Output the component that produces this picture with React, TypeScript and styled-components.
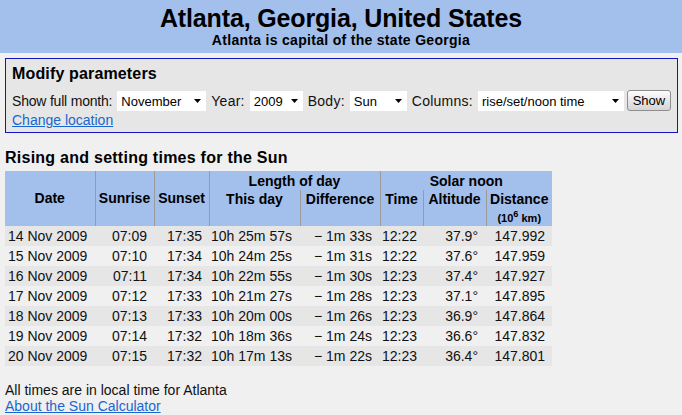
import React from "react";
import styled, { createGlobalStyle } from "styled-components";

const GlobalStyle = createGlobalStyle`
  html, body { margin: 0; padding: 0; background: #f0f0f0; }
  body { font-family: "Liberation Sans", Arial, sans-serif; color: #111; }
`;

const Page = styled.div`
  width: 682px;
`;

const Banner = styled.header`
  background: #a3bfec;
  height: 53px;
  box-sizing: border-box;
  padding-top: 4px;
  text-align: center;
`;

const Title = styled.h1`
  margin: 0;
  font-size: 25px;
  line-height: 28px;
  letter-spacing: -0.15px;
  font-weight: bold;
  color: #000;
`;

const Subtitle = styled.div`
  font-size: 14px;
  line-height: 16px;
  letter-spacing: 0.3px;
  font-weight: bold;
  color: #000;
`;

const Content = styled.main`
  padding: 0 4px 0 5px;
`;

const ParamBox = styled.form`
  margin-top: 5px;
  border: 1px solid #1414c4;
  background: #e6e6e6;
  padding: 5px 6px 4px 6px;
`;

const BoxHeading = styled.h2`
  margin: 0;
  font-size: 16px;
  line-height: 19px;
  letter-spacing: 0.15px;
  font-weight: bold;
  color: #000;
`;

const FormRow = styled.div`
  margin-top: 8px;
  display: flex;
  align-items: center;
  gap: 5px;
  height: 20px;
  font-size: 14px;
`;

const Label = styled.span<{ $tight?: boolean }>`
  color: #111;
  white-space: nowrap;
  letter-spacing: ${(p) => (p.$tight ? "-0.2px" : "0.25px")};
`;

const FakeSelect = styled.div<{ $w: number }>`
  width: ${(p) => p.$w}px;
  height: 20px;
  box-sizing: border-box;
  background: #fff;
  display: flex;
  align-items: center;
  justify-content: space-between;
  padding: 0 5px 0 4px;
  font-size: 13px;
  color: #000;
`;

const Arrow = styled.svg`
  width: 7px;
  height: 4px;
  flex: none;
`;

const ShowButton = styled.button`
  margin-left: -2px;
  width: 44px;
  height: 21px;
  margin-top: -2px;
  box-sizing: border-box;
  border: 1px solid #8e8e8e;
  border-radius: 3px;
  background: linear-gradient(#fdfdfd, #e4e4e4 60%, #d6d6d6);
  font-family: "Liberation Sans", Arial, sans-serif;
  font-size: 13px;
  color: #000;
  padding: 0;
`;

const Link = styled.a`
  color: #1a66d0;
  text-decoration: underline;
  font-size: 14px;
  line-height: 16px;
  display: block;
`;

const LocationLink = styled(Link)`
  margin-top: 1px;
`;

const SectionHeading = styled.h2`
  margin: 15px 0 4px 0;
  font-size: 16px;
  line-height: 19px;
  letter-spacing: 0.25px;
  font-weight: bold;
  color: #000;
`;

const Table = styled.table`
  border-collapse: collapse;
  border-spacing: 0;
  table-layout: fixed;
  width: 547px;
  font-size: 14px;
`;

const Col = styled.col<{ $w: number }>`
  width: ${(p) => p.$w}px;
`;

const Th = styled.th<{ $top?: boolean; $first?: boolean }>`
  background: #a3bfec;
  font-weight: bold;
  color: #000;
  padding: 0 2px;
  text-align: center;
  white-space: nowrap;
  vertical-align: ${(p) => (p.$top ? "top" : "middle")};
  border-left: ${(p) => (p.$first ? "none" : "1px solid #9a9a9a")};
`;

const GroupRow = styled.tr`
  height: 19px;
`;

const SubRow = styled.tr`
  height: 34px;
  & > th {
    padding-top: 1px;
    line-height: 16px;
  }
`;

const Unit = styled.span`
  display: block;
  font-size: 11px;
  line-height: 15px;
`;

const DataRow = styled.tr<{ $odd: boolean }>`
  height: 20px;
  background: ${(p) => (p.$odd ? "#e6e6e6" : "#f0f0f0")};
`;

const Td = styled.td<{ $align?: "left" | "right"; $pad?: number }>`
  padding: 0 ${(p) => (p.$align === "left" ? 0 : p.$pad ?? 7)}px 0
    ${(p) => (p.$align === "left" ? 3 : 0)}px;
  text-align: ${(p) => p.$align ?? "right"};
  white-space: nowrap;
  color: #111;
`;

const Footer = styled.div`
  margin-top: 16px;
  font-size: 14px;
  line-height: 16px;
`;

const rows = [
  ["14 Nov 2009", "07:09", "17:35", "10h 25m 57s", "− 1m 33s", "12:22", "37.9°", "147.992"],
  ["15 Nov 2009", "07:10", "17:34", "10h 24m 25s", "− 1m 31s", "12:22", "37.6°", "147.959"],
  ["16 Nov 2009", "07:11", "17:34", "10h 22m 55s", "− 1m 30s", "12:23", "37.4°", "147.927"],
  ["17 Nov 2009", "07:12", "17:33", "10h 21m 27s", "− 1m 28s", "12:23", "37.1°", "147.895"],
  ["18 Nov 2009", "07:13", "17:33", "10h 20m 00s", "− 1m 26s", "12:23", "36.9°", "147.864"],
  ["19 Nov 2009", "07:14", "17:32", "10h 18m 36s", "− 1m 24s", "12:23", "36.6°", "147.832"],
  ["20 Nov 2009", "07:15", "17:32", "10h 17m 13s", "− 1m 22s", "12:23", "36.4°", "147.801"],
];

const Select = ({ w, value }: { w: number; value: string }) => (
  <FakeSelect $w={w}>
    <span>{value}</span>
    <Arrow viewBox="0 0 7 4">
      <path d="M0 0h7L3.5 4z" fill="#000" />
    </Arrow>
  </FakeSelect>
);

export default function App() {
  return (
    <Page>
      <GlobalStyle />
      <Banner>
        <Title>Atlanta, Georgia, United States</Title>
        <Subtitle>Atlanta is capital of the state Georgia</Subtitle>
      </Banner>
      <Content>
        <ParamBox onSubmit={(e) => e.preventDefault()}>
          <BoxHeading>Modify parameters</BoxHeading>
          <FormRow>
            <Label $tight>Show full month:</Label>
            <Select w={89} value="November" />
            <Label>Year:</Label>
            <Select w={53} value="2009" />
            <Label>Body:</Label>
            <Select w={57} value="Sun" />
            <Label>Columns:</Label>
            <Select w={146} value="rise/set/noon time" />
            <ShowButton type="button">Show</ShowButton>
          </FormRow>
          <LocationLink href="#">Change location</LocationLink>
        </ParamBox>

        <SectionHeading>Rising and setting times for the Sun</SectionHeading>
        <Table>
          <colgroup>
            <Col $w={90} />
            <Col $w={59} />
            <Col $w={55} />
            <Col $w={91} />
            <Col $w={80} />
            <Col $w={43} />
            <Col $w={63} />
            <Col $w={66} />
          </colgroup>
          <thead>
            <GroupRow>
              <Th rowSpan={2} $first>Date</Th>
              <Th rowSpan={2}>Sunrise</Th>
              <Th rowSpan={2}>Sunset</Th>
              <Th colSpan={2}>Length of day</Th>
              <Th colSpan={3}>Solar noon</Th>
            </GroupRow>
            <SubRow>
              <Th $top>This day</Th>
              <Th $top>Difference</Th>
              <Th $top>Time</Th>
              <Th $top>Altitude</Th>
              <Th $top>
                Distance
                <Unit>
                  (10<sup>6</sup> km)
                </Unit>
              </Th>
            </SubRow>
          </thead>
          <tbody>
            {rows.map((r, i) => (
              <DataRow key={r[0]} $odd={i % 2 === 0}>
                <Td $align="left">{r[0]}</Td>
                <Td>{r[1]}</Td>
                <Td>{r[2]}</Td>
                <Td $pad={8}>{r[3]}</Td>
                <Td $pad={8}>{r[4]}</Td>
                <Td $pad={6}>{r[5]}</Td>
                <Td $pad={8}>{r[6]}</Td>
                <Td $pad={7}>{r[7]}</Td>
              </DataRow>
            ))}
          </tbody>
        </Table>
        <Footer>
          All times are in local time for Atlanta
          <Link href="#">About the Sun Calculator</Link>
        </Footer>
      </Content>
    </Page>
  );
}
